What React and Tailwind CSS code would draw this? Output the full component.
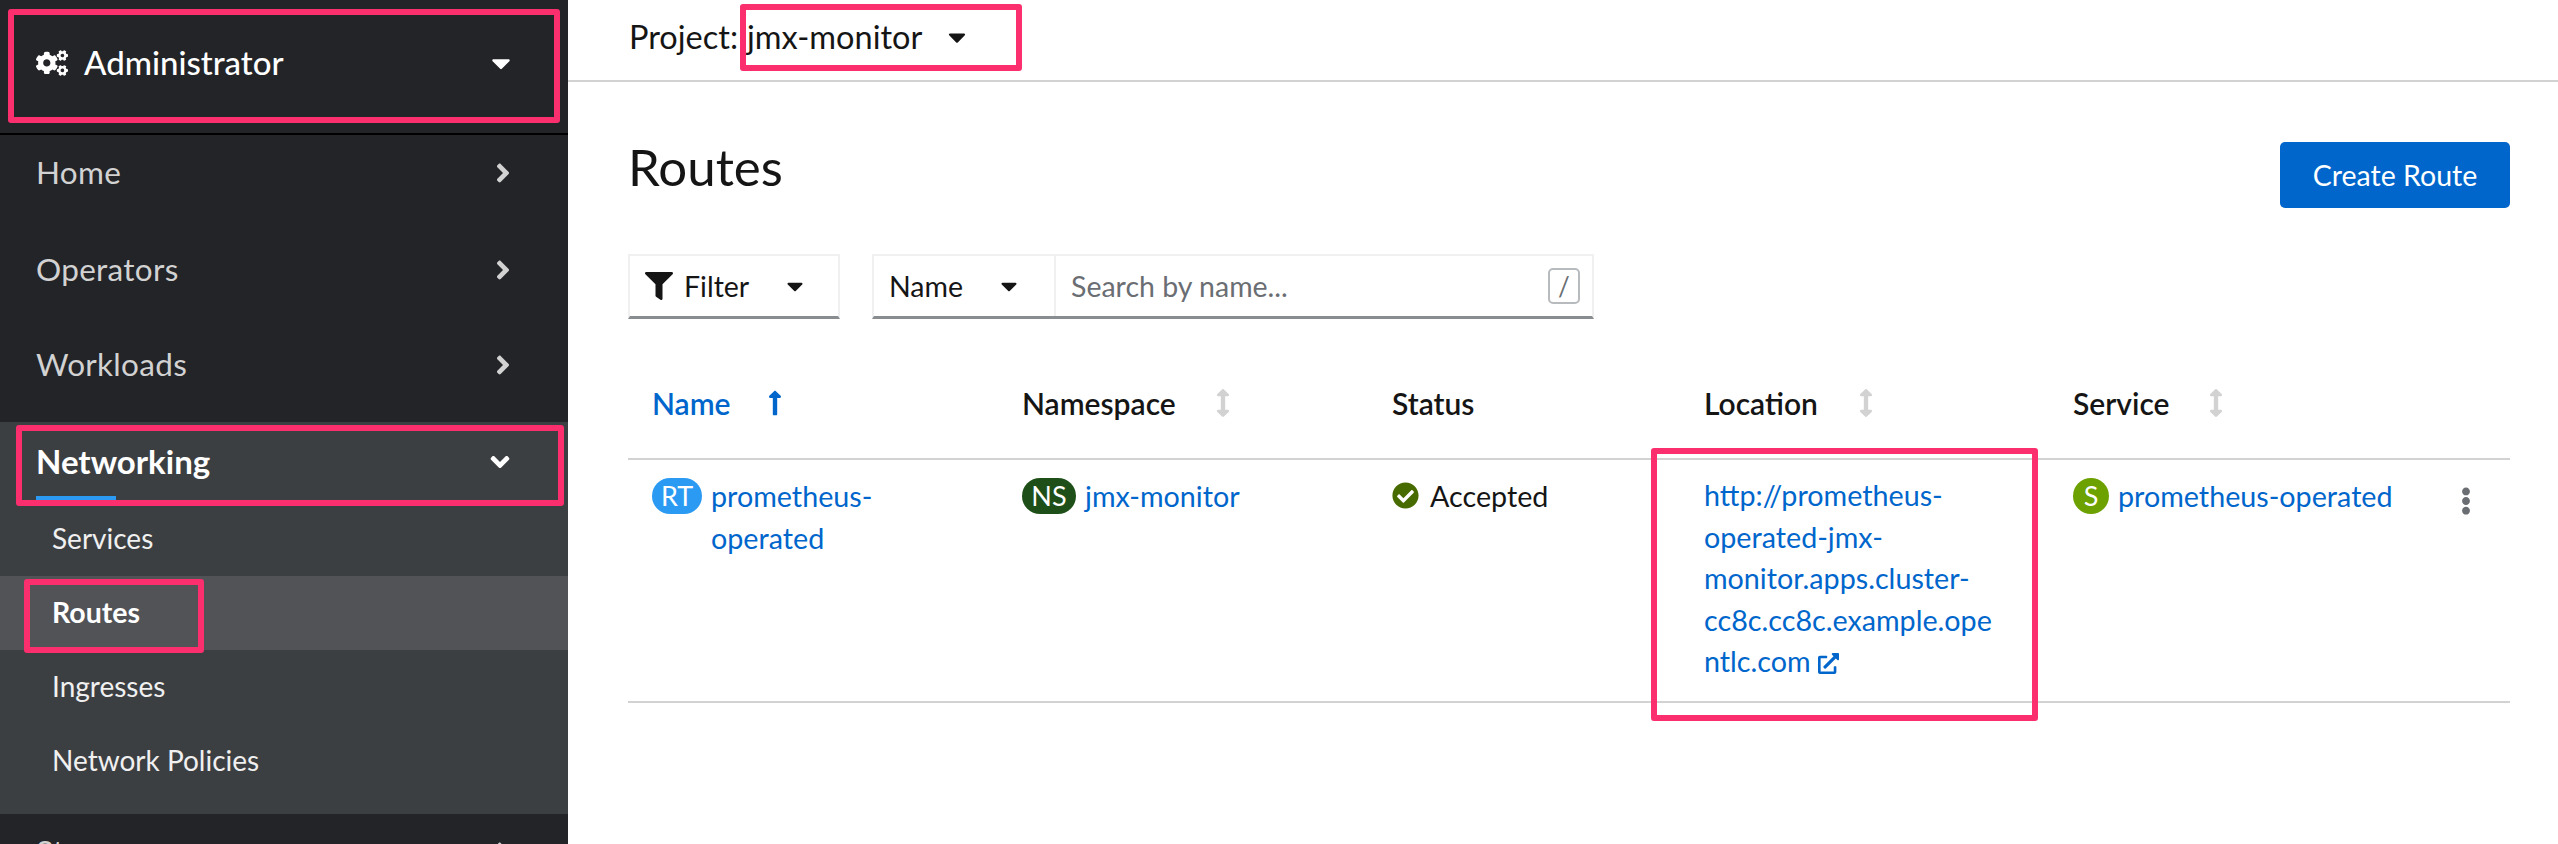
import React from "react";
import { FaCogs, FaAngleRight, FaAngleDown, FaCaretDown, FaFilter, FaLongArrowAltUp, FaArrowsAltV, FaEllipsisV, FaCheckCircle, FaExternalLinkAlt } from "react-icons/fa";

function NavRow({ label, className = "mt-[20px]" }) {
  return (
    <div className={"h-[76px] shrink-0 pl-9 pr-[56px] flex items-center justify-between text-[31.5px] tracking-[0.3px] text-[#d2d2d2] " + className}>
      <span>{label}</span>
      <FaAngleRight className="w-[18px] h-[30px] text-[#d2d2d2]" />
    </div>
  );
}

function Annot({ className }) {
  return <div className={"absolute border-[6px] border-[#fb2e6e] rounded-[3px] pointer-events-none " + className} />;
}

function SortHead({ label, iconGap }) {
  return (
    <div className="flex items-center font-semibold text-[#151515]">
      <span>{label}</span>
      <FaArrowsAltV className={"w-[14px] h-[28px] text-[#d2d2d2] " + iconGap} />
    </div>
  );
}

function Badge({ text, className }) {
  return (
    <span className={"shrink-0 h-[36px] rounded-full flex items-center justify-center text-white text-[27px] " + className}>{text}</span>
  );
}

export default function App() {
  return (
    <div className="relative flex w-full h-[844px] overflow-hidden bg-white text-[#151515] font-['Lato','Liberation_Sans',sans-serif]">
      <aside className="w-[568px] shrink-0 bg-[#232428] flex flex-col overflow-hidden">
        <div className="h-[135px] shrink-0 border-b-2 border-black pb-[8px] pl-9 pr-[56px] flex items-center justify-between text-white">
          <div className="flex items-center gap-[16px]">
            <FaCogs className="w-[32px] h-[26px]" />
            <span className="text-[33px] font-medium">Administrator</span>
          </div>
          <FaCaretDown className="w-[22px] h-[30px]" />
        </div>
        <NavRow label="Home" className="mt-0" />
        <NavRow label="Operators" className="mt-[21px]" />
        <NavRow label="Workloads" className="mt-[19px]" />
        <div className="mt-[19px] shrink-0 bg-[#3c3f42] pb-[16px]">
          <div className="relative h-[80px] pl-9 pr-[56px] flex items-center justify-between text-white text-[33px] font-bold">
            <span>Networking</span>
            <FaAngleDown className="w-[24px] h-[30px]" />
            <div className="absolute left-9 top-[74px] w-[80px] h-[4px] bg-[#2b9af3]" />
          </div>
          <div className="h-[74px] pl-[52px] pb-[2px] flex items-center text-[28px] text-[#f0f0f0]">Services</div>
          <div className="h-[74px] pl-[52px] pb-[2px] flex items-center text-[28.5px] text-white font-bold bg-[#525357]">Routes</div>
          <div className="h-[74px] pl-[52px] pb-[2px] flex items-center text-[28px] text-[#f0f0f0]">Ingresses</div>
          <div className="h-[74px] pl-[52px] pb-[2px] flex items-center text-[28px] text-[#f0f0f0]">Network Policies</div>
        </div>
        <NavRow label="Storage" className="mt-0" />
      </aside>

      <main className="flex-1 min-w-0 flex flex-col">
        <div className="h-[82px] shrink-0 border-b-2 border-[#d2d2d2] pl-[61px] pb-[6px] flex items-center text-[32.5px]">
          <span>Project:</span>
          <span className="ml-[9px]">jmx-monitor</span>
          <FaCaretDown className="ml-[25px] w-[20px] h-[28px]" />
        </div>
        <div className="pl-[60px] pr-[48px]">
          <div className="h-[60px] mt-[60px] flex items-start justify-between">
            <h1 className="text-[51px] leading-[50px] font-normal">Routes</h1>
            <button className="w-[230px] h-[66px] bg-[#0066cc] rounded-[5px] text-white text-[28.5px] flex items-center justify-center">Create Route</button>
          </div>
          <div className="mt-[52px] flex gap-[32px]">
            <div className="w-[212px] h-[65px] border-2 border-[#f0f0f0] border-b-[3px] border-b-[#8a8d90] flex items-center pl-[14px] text-[28.5px]">
              <FaFilter className="w-[30px] h-[28px]" />
              <span className="ml-[10px]">Filter</span>
              <FaCaretDown className="ml-[37px] w-[18px] h-[26px]" />
            </div>
            <div className="w-[722px] h-[65px] flex border-2 border-[#f0f0f0] border-b-[3px] border-b-[#8a8d90] text-[28.5px]">
              <div className="w-[182px] border-r-2 border-[#f0f0f0] flex items-center pl-[15px]">
                <span>Name</span>
                <FaCaretDown className="ml-[37px] w-[18px] h-[26px]" />
              </div>
              <div className="flex-1 flex items-center justify-between pl-[15px] pr-[12px] text-[#6a6e73]">
                <span>Search by name...</span>
                <span className="w-[32px] h-[36px] border-2 border-[#b8bbbe] rounded-[5px] flex items-center justify-center text-[26px] text-[#6a6e73]">/</span>
              </div>
            </div>
          </div>

          <div className="mt-[40px] text-[28.7px] border-b-2 border-[#d2d2d2]">
            <div className="h-[101px] grid grid-cols-[370px_370px_312px_369px_1fr] pl-6 border-b-2 border-[#d2d2d2] pb-[11px] items-center text-[30px]">
              <div className="flex items-center font-semibold text-[#0066cc]">
                <span>Name</span>
                <FaLongArrowAltUp className="ml-[35px] w-[18px] h-[28px]" />
              </div>
              <SortHead label="Namespace" iconGap="ml-[40px]" />
              <div className="font-semibold">Status</div>
              <SortHead label="Location" iconGap="ml-[41px]" />
              <SortHead label="Service" iconGap="ml-[40px]" />
            </div>
            <div className="h-[241px] grid grid-cols-[370px_370px_312px_369px_1fr] pl-6 pt-[15px] leading-[42px] text-[#0066cc]">
              <div className="flex items-start gap-[9px] pr-[120px]">
                <Badge text="RT" className="w-[50px] bg-[#2b9af3] mt-[3px]" />
                <span>prometheus-operated</span>
              </div>
              <div className="flex items-start gap-[9px]">
                <Badge text="NS" className="w-[54px] bg-[#1e4f18] mt-[3px]" />
                <span>jmx-monitor</span>
              </div>
              <div className="flex items-start gap-[11px] text-[#151515]">
                <FaCheckCircle className="w-[27px] h-[27px] mt-[7px] text-[#486b00]" />
                <span>Accepted</span>
              </div>
              <div className="w-[320px] whitespace-nowrap leading-[41.5px]">
                http://prometheus-<br />operated-jmx-<br />monitor.apps.cluster-<br />cc8c.cc8c.example.ope<br />ntlc.com
                <FaExternalLinkAlt className="inline-block ml-[6px] w-[23px] h-[21px] align-[-2px]" />
              </div>
              <div className="flex items-start gap-[9px] relative">
                <Badge text="S" className="w-[36px] bg-[#6ca100] mt-[3px]" />
                <span>prometheus-operated</span>
                <FaEllipsisV className="absolute left-[385px] top-[12px] w-[16px] h-[28px] text-[#6a6e73]" />
              </div>
            </div>
          </div>
        </div>
      </main>

      <Annot className="left-[8px] top-[9px] w-[552px] h-[114px]" />
      <Annot className="left-[16px] top-[425px] w-[548px] h-[81px]" />
      <Annot className="left-[24px] top-[579px] w-[180px] h-[74px]" />
      <Annot className="left-[740px] top-[4px] w-[282px] h-[67px]" />
      <Annot className="left-[1651px] top-[448px] w-[387px] h-[273px]" />
    </div>
  );
}
